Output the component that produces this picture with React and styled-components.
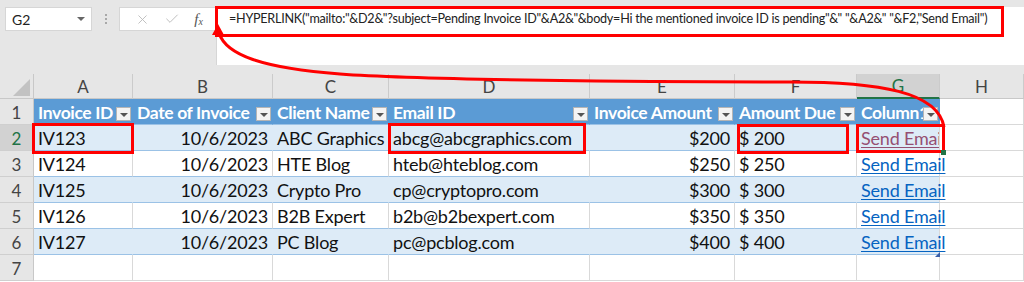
import styled, { createGlobalStyle } from "styled-components";
import { X, Check } from "lucide-react";

const GlobalStyle = createGlobalStyle`
  html, body { margin: 0; padding: 0; background: #ffffff; }
  body { font-family: "Lato", "Liberation Sans", sans-serif; }
`;

const FORMULA =
  '=HYPERLINK("mailto:"&D2&"?subject=Pending Invoice ID"&A2&"&body=Hi the mentioned invoice ID is pending"&" "&A2&" "&F2,"Send Email")';

const COLUMNS = [
  { key: "A", width: 99, align: "left" },
  { key: "B", width: 140, align: "right" },
  { key: "C", width: 116, align: "left" },
  { key: "D", width: 201, align: "left" },
  { key: "E", width: 145, align: "right" },
  { key: "F", width: 122, align: "left" },
  { key: "G", width: 83, align: "left" },
  { key: "H", width: 84, align: "left" },
];

const HEADERS = ["Invoice ID", "Date of Invoice", "Client Name", "Email ID", "Invoice Amount", "Amount Due", "Column1"];

const ROWS = [
  ["IV123", "10/6/2023", "ABC Graphics", "abcg@abcgraphics.com", "$200", "$ 200"],
  ["IV124", "10/6/2023", "HTE Blog", "hteb@hteblog.com", "$250", "$ 250"],
  ["IV125", "10/6/2023", "Crypto Pro", "cp@cryptopro.com", "$300", "$ 300"],
  ["IV126", "10/6/2023", "B2B Expert", "b2b@b2bexpert.com", "$350", "$ 350"],
  ["IV127", "10/6/2023", "PC Blog", "pc@pcblog.com", "$400", "$ 400"],
];

export default function App() {
  return (
    <Page>
      <GlobalStyle />
      <TopBar>
        <NameBox>
          <span>G2</span>
          <Caret />
        </NameBox>
        <Grip>
          <i /><i /><i />
        </Grip>
        <FxControls>
          <X size={15} strokeWidth={1.4} color="#b9b9b9" />
          <Check size={16} strokeWidth={1.4} color="#b9b9b9" />
          <FxLabel>f<sub>x</sub></FxLabel>
        </FxControls>
        <FormulaInput>{FORMULA}</FormulaInput>
      </TopBar>

      <Sheet>
        <Corner>
          <svg width="34" height="25">
            <polygon points="13,22 30,22 30,5" fill="#c2c2c2" />
          </svg>
        </Corner>
        {COLUMNS.map((c) => (
          <ColHeader key={c.key} $selected={c.key === "G"}>{c.key}</ColHeader>
        ))}

        <RowHeader>1</RowHeader>
        {HEADERS.map((h) => (
          <HeadCell key={h}>
            {h}
            <FilterButton />
          </HeadCell>
        ))}
        <Cell $last />

        {ROWS.map((r, i) => {
          const band = i % 2 === 0;
          return [
            <RowHeader key={"rh" + i} $selected={i === 0}>{i + 2}</RowHeader>,
            ...r.map((v, j) => (
              <Cell key={i + "-" + j} $band={band} $table $align={COLUMNS[j].align}>{v}</Cell>
            )),
            <Cell key={i + "-g"} $band={band} $table $tableEnd $clip={i === 0}>
              <LinkText $visited={i === 0}>Send Email</LinkText>
            </Cell>,
            <Cell key={i + "-h"} $last />,
          ];
        })}

        <RowHeader>7</RowHeader>
        {COLUMNS.map((c) => (
          <Cell key={"7" + c.key} $last={c.key === "H"} />
        ))}
      </Sheet>

      <Annotations width="1024" height="282" viewBox="0 0 1024 282">
        <g fill="none" stroke="#ff0000" strokeWidth="3">
          <rect x="216.5" y="7.5" width="786" height="28" />
          <rect x="33.5" y="124.5" width="99" height="28" />
          <rect x="389.5" y="124.5" width="195" height="28" />
          <rect x="738.5" y="125.5" width="109" height="27" />
          <rect x="857.5" y="125.5" width="86" height="26" />
          <path d="M 219 33 C 226 55, 262 68, 340 74 C 420 80, 650 82, 790 82 C 880 82, 938 92, 944 127" />
        </g>
        <polygon points="212,35 224,35 218,24" fill="#ff0000" />
        <rect x="941" y="150" width="5" height="5" fill="#217346" />
        <polygon points="940,252 940,257 935,257" fill="#3a5fa8" />
      </Annotations>
    </Page>
  );
}

const Page = styled.div`
  position: relative;
  width: 1024px;
  height: 282px;
  overflow: hidden;
  background: #ffffff;
`;

const TopBar = styled.div`
  display: flex;
  align-items: flex-start;
  height: 74px;
  padding-top: 7px;
  box-sizing: border-box;
  background: #e6e6e6;
`;

const NameBox = styled.div`
  display: flex;
  align-items: center;
  justify-content: space-between;
  box-sizing: border-box;
  width: 87px;
  height: 24px;
  margin-left: 5px;
  padding: 0 6px 0 6px;
  background: #ffffff;
  border: 1px solid #d6d6d6;
  font-size: 14px;
  color: #222;
`;

const Caret = styled.span`
  width: 0;
  height: 0;
  border-left: 4px solid transparent;
  border-right: 4px solid transparent;
  border-top: 4px solid #666;
`;

const Grip = styled.div`
  display: flex;
  flex-direction: column;
  gap: 2px;
  width: 27px;
  height: 24px;
  align-items: center;
  justify-content: center;

  i {
    width: 2px;
    height: 2px;
    background: #a8a8a8;
  }
`;

const FxControls = styled.div`
  display: flex;
  align-items: center;
  justify-content: space-around;
  box-sizing: border-box;
  width: 97px;
  height: 24px;
  padding: 0 6px 0 8px;
  background: #ffffff;
  border: 1px solid #d6d6d6;
  border-right: none;
`;

const FxLabel = styled.span`
  font-family: "Liberation Serif", serif;
  font-style: italic;
  font-size: 15px;
  color: #555;

  sub {
    font-size: 10px;
    vertical-align: -1px;
  }
`;

const FormulaInput = styled.div`
  flex: 1;
  height: 58px;
  box-sizing: border-box;
  padding: 4px 0 0 12px;
  background: #ffffff;
  border-left: 1px solid #d6d6d6;
  font-size: 12.6px;
  letter-spacing: -0.25px;
  color: #222;
  white-space: nowrap;
  overflow: hidden;
`;

const Sheet = styled.div`
  display: grid;
  grid-template-columns: 34px ${COLUMNS.map((c) => c.width + "px").join(" ")};
  grid-template-rows: 25px repeat(7, 26px);
  font-size: 18px;
  letter-spacing: -0.2px;
`;

const Corner = styled.div`
  background: #e6e6e6;
  border-right: 1px solid #c8c8c8;
  border-bottom: 1px solid #c8c8c8;
  box-sizing: border-box;
`;

const ColHeader = styled.div`
  display: flex;
  align-items: center;
  justify-content: center;
  box-sizing: border-box;
  background: ${(p) => (p.$selected ? "#d2d2d2" : "#e6e6e6")};
  color: ${(p) => (p.$selected ? "#217346" : "#444")};
  border-right: 1px solid #cbcbcb;
  border-bottom: ${(p) => (p.$selected ? "2px solid #217346" : "1px solid #c8c8c8")};
  font-size: 17px;
  letter-spacing: 0;
`;

const RowHeader = styled.div`
  display: flex;
  align-items: center;
  justify-content: center;
  box-sizing: border-box;
  background: ${(p) => (p.$selected ? "#d2d2d2" : "#e6e6e6")};
  color: ${(p) => (p.$selected ? "#217346" : "#444")};
  border-right: 1px solid #c8c8c8;
  border-bottom: 1px solid #cfcfcf;
  font-size: 17px;
  letter-spacing: 0;
  padding-top: 1px;
`;

const HeadCell = styled.div`
  position: relative;
  box-sizing: border-box;
  padding: 2px 4px 0 4px;
  background: #5b9bd5;
  border-right: 1px solid #5b9bd5;
  border-bottom: 1px solid #9bc2e6;
  color: #ffffff;
  font-weight: 700;
  font-size: 17.5px;
  letter-spacing: -0.35px;
  line-height: 23px;
  white-space: nowrap;
  overflow: hidden;
`;

const FilterButton = styled.span`
  position: absolute;
  right: 1px;
  bottom: 3px;
  width: 15px;
  height: 14px;
  box-sizing: border-box;
  background: #f4f4f4;
  border: 1px solid #b5b5b5;

  &::after {
    content: "";
    position: absolute;
    left: 3px;
    bottom: 3px;
    border-left: 4px solid transparent;
    border-right: 4px solid transparent;
    border-top: 4px solid #555;
  }
`;

const Cell = styled.div`
  box-sizing: border-box;
  padding: 2px 4px 0 4px;
  line-height: 23px;
  white-space: nowrap;
  color: #111;
  text-align: ${(p) => p.$align || "left"};
  background: ${(p) => (p.$band ? "#ddebf7" : "#ffffff")};
  border-bottom: 1px solid ${(p) => (p.$table ? "#9bc2e6" : "#d9d9d9")};
  border-right: 1px solid ${(p) => (p.$band && !p.$tableEnd ? "#ddebf7" : "#d9d9d9")};
  overflow: ${(p) => (p.$clip ? "hidden" : "visible")};
  position: relative;
`;

const LinkText = styled.span`
  color: ${(p) => (p.$visited ? "#954f72" : "#0563c1")};
  text-decoration: underline;
  text-underline-offset: 2px;
  position: relative;
  z-index: 1;
`;

const Annotations = styled.svg`
  position: absolute;
  left: 0;
  top: 0;
  pointer-events: none;
  z-index: 5;
`;
